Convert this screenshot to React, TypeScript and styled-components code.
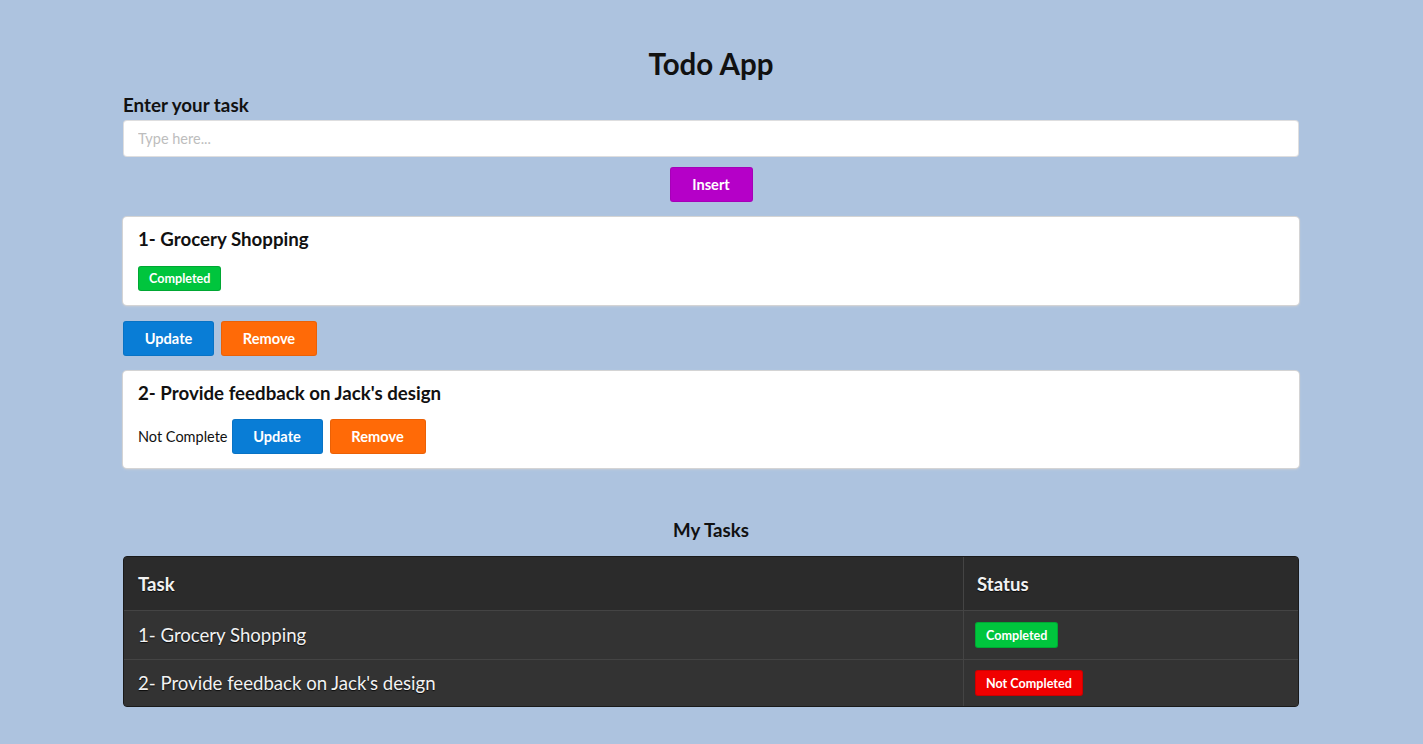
import React from "react";
import styled, { createGlobalStyle } from "styled-components";

const Global = createGlobalStyle`
  html, body { margin: 0; padding: 0; }
  body {
    background: #adc3df;
    font-family: Lato, "Helvetica Neue", Arial, sans-serif;
    font-size: 14px;
    color: rgba(0,0,0,0.87);
  }
  * { box-sizing: border-box; }
`;

const Page = styled.div`
  margin: 0 124px 0 123px;
  padding-top: 47px;
  padding-bottom: 38px;
  display: flex;
  flex-direction: column;
`;

const Title = styled.h1`
  margin: 0;
  text-align: center;
  font-size: 29.5px;
  line-height: 34px;
  font-weight: 700;
  color: #111;
`;

const Label = styled.label`
  margin-top: 14px;
  font-size: 18.8px;
  line-height: 20px;
  font-weight: 700;
  color: #111;
`;

const Input = styled.input`
  margin-top: 5px;
  height: 37px;
  width: 100%;
  border: 1px solid rgba(34,36,38,0.15);
  border-radius: 4px;
  padding: 0 14px;
  font-family: Lato, sans-serif;
  font-size: 14.5px;
  background: #fff;
  outline: none;
  &::placeholder { color: #bdbdbd; }
`;

const Center = styled.div`
  display: flex;
  justify-content: center;
  margin-top: 10px;
`;

const Btn = styled.button<{ $bg: string; $w: number }>`
  height: 35px;
  width: ${(p) => p.$w}px;
  border: none;
  border-radius: 3px;
  background: ${(p) => p.$bg};
  color: #fff;
  font-family: Lato, sans-serif;
  font-weight: 700;
  font-size: 14.6px;
  cursor: pointer;
  padding: 0;
  box-shadow: inset 0 0 0 1px rgba(0,0,0,0.08);
`;

const Card = styled.div<{ $top: number }>`
  margin-top: ${(p) => p.$top}px;
  background: #fff;
  border-radius: 4px;
  box-shadow: 0 1px 3px 0 #d4d4d5, 0 0 0 1px #d4d4d5;
  padding: 12px 15px 14px;
  display: flex;
  flex-direction: column;
`;

const CardTitle = styled.div`
  font-size: 18.7px;
  line-height: 20px;
  font-weight: 700;
  color: #111;
`;

const Badge = styled.span<{ $bg: string }>`
  display: inline-flex;
  align-items: center;
  justify-content: center;
  height: 25px;
  padding: 0 11px;
  border-radius: 3px;
  background: ${(p) => p.$bg};
  color: #fff;
  font-weight: 700;
  font-size: 12.6px;
  box-shadow: inset 0 0 0 1px rgba(0,0,0,0.15);
`;

const BadgeRow = styled.div`
  margin-top: 17px;
  display: flex;
`;

const BtnRow = styled.div<{ $top: number }>`
  margin-top: ${(p) => p.$top}px;
  display: flex;
  align-items: center;
  gap: 7px;
`;

const Plain = styled.span`
  font-size: 14.5px;
  color: #111;
  margin-right: -3px;
`;

const SectionTitle = styled.h3`
  margin: 52px 0 0;
  text-align: center;
  font-size: 18.7px;
  line-height: 20px;
  font-weight: 700;
  color: #111;
`;

const Table = styled.div`
  margin-top: 16px;
  border-radius: 4px;
  overflow: hidden;
  background: #333;
  border: 1px solid #1a1a1a;
  display: grid;
  grid-template-columns: 839px 1fr;
`;

const Cell = styled.div<{ $head?: boolean; $h: number; $right?: boolean; $pl?: number }>`
  height: ${(p) => p.$h}px;
  display: flex;
  align-items: center;
  background: ${(p) => (p.$head ? "#2b2b2b" : "#333")};
  color: #f2f2f2;
  font-size: 18.6px;
  font-weight: ${(p) => (p.$head ? 700 : 400)};
  text-shadow: 0 1px 1px rgba(0,0,0,0.8);
  border-top: ${(p) => (p.$head ? "none" : "1px solid #444")};
  border-left: ${(p) => (p.$right ? "1px solid #444" : "none")};
  padding: 0 14px 0 ${(p) => p.$pl ?? 14}px;
`;

const TableBadge = styled(Badge)`
  text-shadow: none;
  height: 26px;
`;

export default function App() {
  return (
    <>
      <Global />
      <Page>
        <Title>Todo App</Title>
        <Label>Enter your task</Label>
        <Input placeholder="Type here..." />
        <Center>
          <Btn $bg="#b500c8" $w={83}>Insert</Btn>
        </Center>

        <Card $top={15}>
          <CardTitle>1- Grocery Shopping</CardTitle>
          <BadgeRow>
            <Badge $bg="#00c53d">Completed</Badge>
          </BadgeRow>
        </Card>
        <BtnRow $top={16}>
          <Btn $bg="#097dd6" $w={91}>Update</Btn>
          <Btn $bg="#ff6a07" $w={96}>Remove</Btn>
        </BtnRow>

        <Card $top={15}>
          <CardTitle>2- Provide feedback on Jack's design</CardTitle>
          <BtnRow $top={16}>
            <Plain>Not Complete</Plain>
            <Btn $bg="#097dd6" $w={91}>Update</Btn>
            <Btn $bg="#ff6a07" $w={96}>Remove</Btn>
          </BtnRow>
        </Card>

        <SectionTitle>My Tasks</SectionTitle>
        <Table>
          <Cell $head $h={53}>Task</Cell>
          <Cell $head $h={53} $right $pl={13}>Status</Cell>
          <Cell $h={49}>1- Grocery Shopping</Cell>
          <Cell $h={49} $right $pl={11}>
            <TableBadge $bg="#00c53d">Completed</TableBadge>
          </Cell>
          <Cell $h={47}>2- Provide feedback on Jack's design</Cell>
          <Cell $h={47} $right $pl={11}>
            <TableBadge $bg="#f00000">Not Completed</TableBadge>
          </Cell>
        </Table>
      </Page>
    </>
  );
}
